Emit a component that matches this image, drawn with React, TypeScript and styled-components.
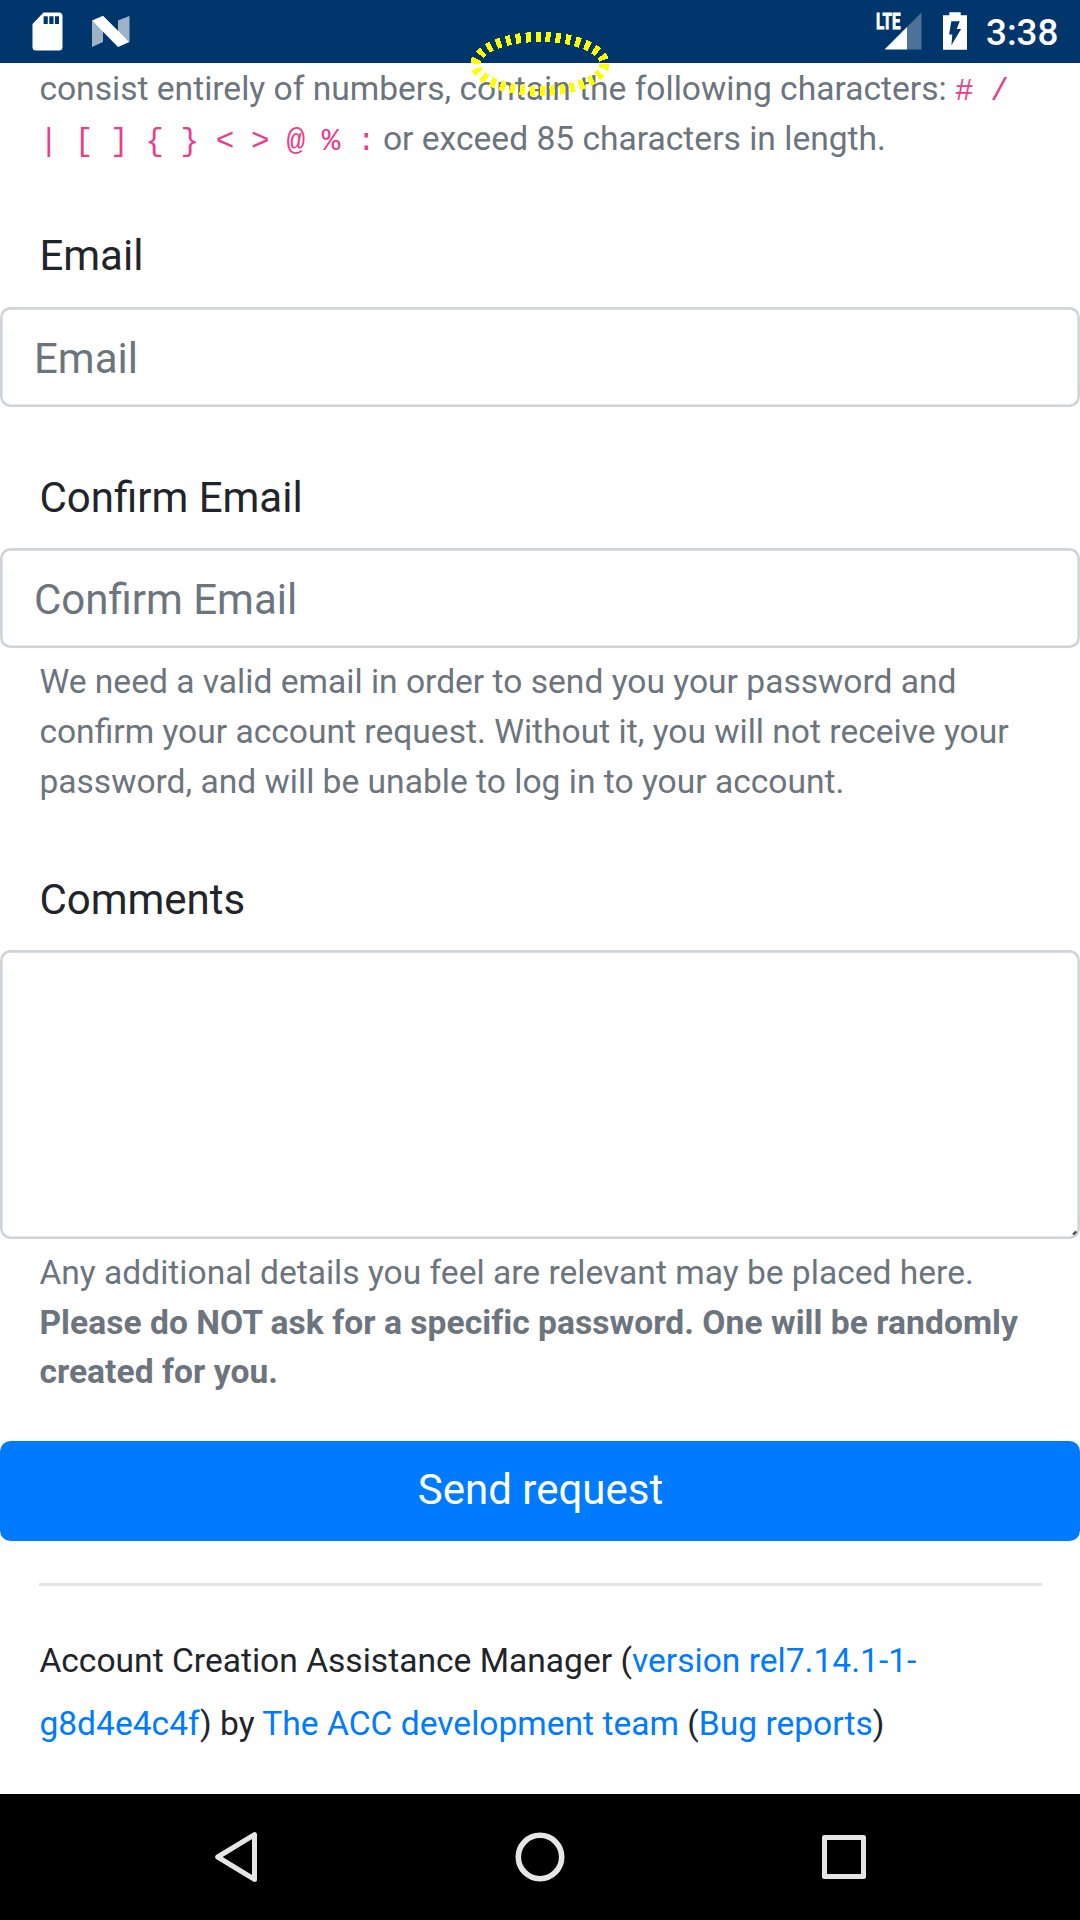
import React from 'react';
import styled, { createGlobalStyle } from 'styled-components';

const Global = createGlobalStyle`
  html, body { margin: 0; padding: 0; background: #fff; }
  *, *::before, *::after { box-sizing: border-box; }
`;

const Screen = styled.div`
  position: relative;
  width: 1080px;
  height: 1920px;
  overflow: hidden;
  display: flex;
  flex-direction: column;
  background: #fff;
  color: #212529;
  font: 400 42px/63px Roboto, sans-serif;
`;

const StatusBar = styled.header`
  flex: none;
  height: 63px;
  padding: 0 22px 0 27px;
  display: flex;
  justify-content: space-between;
  background: #00366b;
  color: #fff;
`;

const StatusGroup = styled.div`
  display: flex;
  height: 63px;
`;

const Clock = styled.time`
  width: 72px;
  margin-left: 14px;
  font-size: 36.75px;
  font-weight: 500;
  line-height: 66px;
`;

const Page = styled.main`
  flex: 1;
  min-height: 0;
  display: flex;
  flex-direction: column;
`;

const HelpText = styled.p<{ $gap: number; $leading?: number }>`
  margin: ${({ $gap }) => $gap}px 0 0;
  padding: 0 39.4px;
  color: #6c757d;
  font-size: 33.6px;
  line-height: ${({ $leading = 50 }) => $leading}px;
`;

const Line = styled.span`
  display: block;
  white-space: pre;
`;

const Strong = styled.strong`
  font-weight: 700;
  letter-spacing: 0.038px;
`;

const Code = styled.code`
  color: #e83e8c;
  font-family: "Liberation Mono", monospace;
  font-size: 31px;
  letter-spacing: -0.96px;
  line-height: 1;
`;

const Label = styled.label<{ $gap: number }>`
  display: block;
  margin-top: ${({ $gap }) => $gap}px;
  padding-left: 39.4px;
  height: 63px;
`;

const Input = styled.input<{ $gap: number }>`
  display: block;
  width: 1080px;
  height: 100px;
  margin: ${({ $gap }) => $gap}px 0 0;
  padding: 3px 34px 0;
  border: 0;
  border-radius: 10.5px;
  box-shadow: inset 0 0 0 2.625px #ced4da;
  background: #fff;
  font: inherit;
  outline: none;
  &::placeholder { color: #6c757d; opacity: 1; }
`;

const AreaFrame = styled.div`
  position: relative;
  height: 289px;
  margin-top: 19px;
`;

const Area = styled.textarea`
  display: block;
  width: 1080px;
  height: 289px;
  margin: 0;
  padding: 18px 34px;
  border: 0;
  border-radius: 10.5px;
  box-shadow: inset 0 0 0 2.625px #ced4da;
  background: #fff;
  font: inherit;
  resize: none;
  outline: none;
`;

const Grip = styled.svg`
  position: absolute;
  right: 2px;
  bottom: 3px;
`;

const SendButton = styled.button`
  display: block;
  width: 1080px;
  height: 100px;
  margin: 44px 0 0;
  padding: 0 0 2px 1px;
  border: 0;
  border-radius: 10.5px;
  background: #007bff;
  color: #fff;
  font: inherit;
  line-height: 98px;
`;

const Rule = styled.hr`
  width: 1003px;
  height: 3px;
  margin: 42px 38px 0 39px;
  border: 0;
  background: #e5e5e5;
`;

const Footer = styled.footer`
  margin-top: 43px;
  padding-left: 39.4px;
  font-size: 33.6px;
  line-height: 63px;
`;

const Link = styled.a`
  color: #007bff;
  text-decoration: none;
`;

const NavBar = styled.nav`
  flex: none;
  height: 126px;
  padding: 0 206px;
  display: flex;
  align-items: center;
  justify-content: space-between;
  background: #000;
`;

const FocusRing = styled.svg`
  position: absolute;
  left: 465px;
  top: 26px;
`;

export default function App() {
  return (
    <Screen>
      <Global />
      <StatusBar>
        <StatusGroup>
          <svg width="110" height="63" viewBox="27 0 110 63">
            <path fill="#fff" fillRule="evenodd" d="M43.5 12.5H59a3.5 3.5 0 0 1 3.5 3.5v31a3.5 3.5 0 0 1-3.5 3.5H36a3.5 3.5 0 0 1-3.5-3.5V24zM43.6 16.3V24h4.2v-7.7zm5.7 0V24h4.2v-7.7zm5.6 0V24H59v-7.7z" />
            <path fill="#9fb2c8" d="M92 20.5L103 31v11l-11 5zM118 20.5l11.5-4.5v26L118 32z" />
            <path fill="#fff" d="M92 20.5L103 15.8 129.3 42 118 47z" />
          </svg>
        </StatusGroup>
        <StatusGroup>
          <svg width="100" height="63" viewBox="872 0 100 63">
            <text x="876" y="28.8" fill="#fff" stroke="#fff" strokeWidth="0.8" fontFamily="Roboto, sans-serif" fontWeight="700" fontSize="21.5" textLength="24.5" lengthAdjust="spacingAndGlyphs">LTE</text>
            <path fill="#4d7297" d="M907 27l14.5-14.5V49.5H907z" />
            <path fill="#fff" d="M884.5 49.5L907 27v22.5z" />
            <path fill="#fff" d="M949.3 12.3h11.4v3H967v34.4h-24V15.3h6.3z" />
            <path fill="#00366b" d="M951.3 21.3h8.4l-3 7.8h4.4l-9.7 16.2.9-10.9h-3.2z" />
          </svg>
          <Clock>3:38</Clock>
        </StatusGroup>
      </StatusBar>

      <Page>
        <HelpText $gap={1}>
          <Line>consist entirely of numbers, contain the following characters: <Code># /</Code></Line>
          <Line><Code>| [ ] {'{ }'} &lt; &gt; @ % :</Code> or exceed 85 characters in length.</Line>
        </HelpText>

        <Label $gap={60} htmlFor="email">Email</Label>
        <Input $gap={20} id="email" placeholder="Email" />

        <Label $gap={59} htmlFor="confirm">Confirm Email</Label>
        <Input $gap={19} id="confirm" placeholder="Confirm Email" />
        <HelpText $gap={9}>
          <Line>We need a valid email in order to send you your password and</Line>
          <Line>confirm your account request. Without it, you will not receive your</Line>
          <Line>password, and will be unable to log in to your account.</Line>
        </HelpText>

        <Label $gap={61} htmlFor="comments">Comments</Label>
        <AreaFrame>
          <Area id="comments" />
          <Grip width="6" height="6" viewBox="0 0 6 6">
            <path d="M1 4.5L4.5 1.5" stroke="#555" strokeWidth="2.5" />
          </Grip>
        </AreaFrame>
        <HelpText $gap={9} $leading={149 / 3}>
          <Line>Any additional details you feel are relevant may be placed here.</Line>
          <Line><Strong>Please do NOT ask for a specific password. One will be randomly</Strong></Line>
          <Line><Strong>created for you.</Strong></Line>
        </HelpText>

        <SendButton>Send request</SendButton>
        <Rule />
        <Footer>
          <Line>Account Creation Assistance Manager (<Link>version rel7.14.1-1-</Link></Line>
          <Line><Link>g8d4e4c4f</Link>) by <Link>The ACC development team</Link> (<Link>Bug reports</Link>)</Line>
        </Footer>
      </Page>

      <NavBar>
        <svg width="60" height="60" viewBox="206 1827 60 60" fill="none" stroke="#e6e6e6">
          <path d="M254.5 1834.6v44.8L217.7 1857z" strokeWidth="5" strokeLinejoin="round" />
        </svg>
        <svg width="60" height="60" viewBox="510 1827 60 60" fill="none" stroke="#e6e6e6">
          <circle cx="540" cy="1857" r="21.7" strokeWidth="5.6" />
        </svg>
        <svg width="60" height="60" viewBox="814 1827 60 60" fill="none" stroke="#e6e6e6">
          <rect x="824.5" y="1837.5" width="39" height="39" strokeWidth="5" strokeLinejoin="round" />
        </svg>
      </NavBar>

      <FocusRing width="150" height="76" viewBox="465 26 150 76">
        <ellipse cx="540" cy="64" rx="64.5" ry="27" fill="none" stroke="#ff0" strokeWidth="10" strokeDasharray="5" shapeRendering="crispEdges" />
      </FocusRing>
    </Screen>
  );
}
